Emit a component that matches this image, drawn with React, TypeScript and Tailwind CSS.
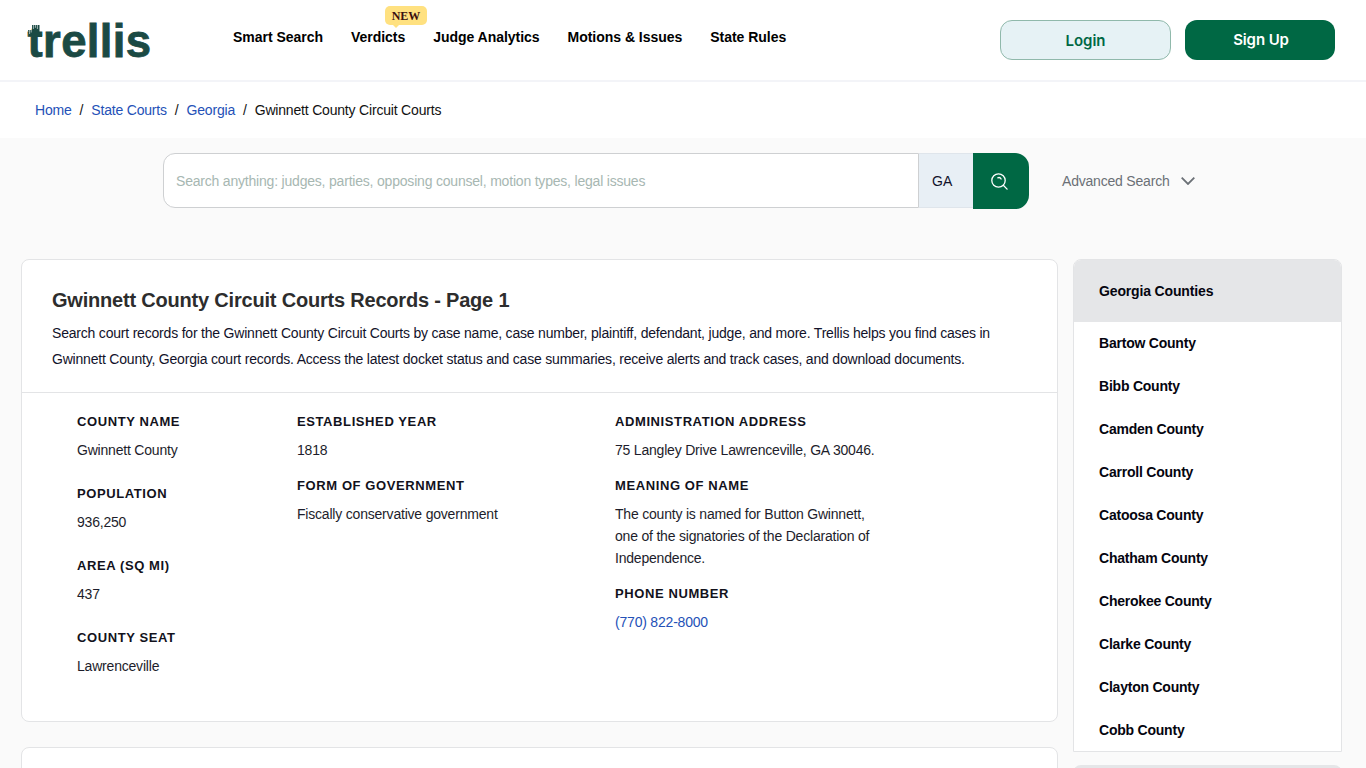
import React from "react";

type Detail = { label: string; value: string; link?: boolean };

const navItems = ["Smart Search", "Verdicts", "Judge Analytics", "Motions & Issues", "State Rules"];

const columnOne: Detail[] = [
  { label: "County Name", value: "Gwinnett County" },
  { label: "Population", value: "936,250" },
  { label: "Area (sq mi)", value: "437" },
  { label: "County Seat", value: "Lawrenceville" },
];

const columnTwo: Detail[] = [
  { label: "Established Year", value: "1818" },
  { label: "Form of Government", value: "Fiscally conservative government" },
];

const columnThree: Detail[] = [
  { label: "Administration Address", value: "75 Langley Drive Lawrenceville, GA 30046." },
  {
    label: "Meaning of Name",
    value: "The county is named for Button Gwinnett, one of the signatories of the Declaration of Independence.",
  },
  { label: "Phone Number", value: "(770) 822-8000", link: true },
];

const counties = [
  "Bartow County",
  "Bibb County",
  "Camden County",
  "Carroll County",
  "Catoosa County",
  "Chatham County",
  "Cherokee County",
  "Clarke County",
  "Clayton County",
  "Cobb County",
];

function Logo() {
  return (
    <svg className="block h-[60px] w-[130px] overflow-visible" viewBox="0 0 130 60" aria-label="trellis">
      <text
        x="-0.4"
        y="46.7"
        fontSize="45.5"
        fontWeight="700"
        letterSpacing="0.35"
        fill="#1b4a44"
        stroke="#1b4a44"
        strokeWidth="0.8"
        fontFamily="Liberation Sans, Arial, sans-serif"
      >
        trellis
      </text>
      {/* stepped columns on the crossbar of the t */}
      <path d="M0 20h4v-5h7.5v9H14v3H4v-1H1.5z" fill="#1b4a44" />
      <path d="M1.6 20v4M3.2 20v2.5M5.4 15v4M7.4 15v2.8M9.4 15v4" stroke="#fff" strokeWidth="0.6" />
    </svg>
  );
}

function Header() {
  return (
    <header className="flex h-[82px] items-start border-b-2 border-[#f3f4f8] bg-white pl-7">
      <div className="w-[205px] pt-2.5">
        <Logo />
      </div>
      <nav className="flex gap-7 pt-[27px] text-[14px] leading-5 font-bold tracking-[-0.03px] text-black">
        {navItems.map((item) => (
          <a key={item} href="#" className="relative whitespace-nowrap">
            {item}
            {item === "Verdicts" && (
              <span className="absolute -top-[21px] left-[34px] h-[19px] w-[42px] rounded-[5px] bg-[#ffe180] text-center font-['Liberation_Serif',serif] text-[12px] leading-5 text-[#3a1010]">
                NEW
                <span className="absolute top-[18px] left-[7px] border-x-4 border-t-4 border-x-transparent border-t-[#ffe180]" />
              </span>
            )}
          </a>
        ))}
      </nav>
      <div className="mt-5 mr-[31px] ml-auto flex gap-3.5 font-['Inter',sans-serif] text-[15px] font-semibold">
        <button className="h-10 w-[171px] rounded-xl border border-[#90b9ab] bg-[#e6f2f5] pt-0.5 text-[#006844]">
          Login
        </button>
        <button className="h-10 w-[150px] rounded-xl bg-[#006844] pl-0.5 tracking-[-0.1px] text-white">Sign Up</button>
      </div>
    </header>
  );
}

function Breadcrumbs() {
  return (
    <div className="flex h-14 items-center gap-2 bg-white pl-[35px] text-[14px] tracking-[-0.19px] text-[#111]">
      <a href="#" className="text-[#2451b7]">Home</a>
      <span>/</span>
      <a href="#" className="text-[#2451b7]">State Courts</a>
      <span>/</span>
      <a href="#" className="text-[#2451b7]">Georgia</a>
      <span>/</span>
      <span>Gwinnett County Circuit Courts</span>
    </div>
  );
}

function SearchBar() {
  return (
    <div className="flex h-[71px] pt-[15px] pl-[163px] text-[14px] tracking-[-0.2px]">
      <div className="flex h-[55px] w-[756px] items-center rounded-l-xl border border-[#ced0d2] bg-white pt-0.5 pl-3 text-[#a7b7b2]">
        Search anything: judges, parties, opposing counsel, motion types, legal issues
      </div>
      <div className="flex h-[55px] w-[54px] items-center border-y border-[#dfe5eb] bg-[#e8eff5] pt-0.5 pl-[13px] tracking-normal text-[#12122a]">
        GA
      </div>
      <button className="flex h-14 w-14 items-center rounded-r-[14px] bg-[#006844] pl-[18px]">
        <svg className="size-[17px]" viewBox="0 0 17 17" fill="none" stroke="white" strokeWidth="1.3" strokeLinecap="round">
          <circle cx="7.5" cy="7.5" r="6.7" />
          <path d="M12.3 12.3l3.8 3.8M6.8 4.8c1.5-.6 2.7 0 3.3 1.2" />
        </svg>
      </button>
      <div className="ml-[33px] flex h-14 items-center text-[#6b7076]">
        Advanced Search
        <svg className="ml-[11px] h-2 w-[14px]" viewBox="0 0 14 8" fill="none" stroke="currentColor" strokeWidth="1.8">
          <path d="M.7.7L7 7 13.3.7" />
        </svg>
      </div>
    </div>
  );
}

function DetailColumn({ items, className }: { items: Detail[]; className: string }) {
  return (
    <dl className={`flex flex-col ${className}`}>
      {items.map((item) => (
        <div key={item.label}>
          <dt className="text-[13px] leading-5 font-bold tracking-[0.6px] text-[#12121c] uppercase">{item.label}</dt>
          <dd className={`mt-[7px] leading-[22px] ${item.link ? "text-[#2451b7]" : "text-[#1d1d2b]"}`}>{item.value}</dd>
        </div>
      ))}
    </dl>
  );
}

function CountyCard() {
  return (
    <section className="h-[463px] rounded-lg border border-[#e3e4e6] bg-white text-[14px] tracking-[-0.2px]">
      <div className="h-[133px] border-b border-[#e3e4e6] pt-[26px] pl-[30px]">
        <h1 className="text-[20px] leading-7 font-bold text-[#2d2d2d]">Gwinnett County Circuit Courts Records - Page 1</h1>
        <p className="mt-1.5 w-[960px] leading-[26px] text-[#12122a]">
          Search court records for the Gwinnett County Circuit Courts by case name, case number, plaintiff, defendant,
          judge, and more. Trellis helps you find cases in
          <br />
          Gwinnett County, Georgia court records. Access the latest docket status and case summaries, receive alerts and
          track cases, and download documents.
        </p>
      </div>
      <div className="flex pt-[19px] pl-[55px]">
        <DetailColumn items={columnOne} className="w-[220px] gap-[23px]" />
        <DetailColumn items={columnTwo} className="w-[318px] gap-[15px]" />
        <DetailColumn items={columnThree} className="w-[265px] gap-[15px]" />
      </div>
    </section>
  );
}

function Sidebar() {
  return (
    <aside className="w-[269px] text-[14px] font-bold tracking-[-0.22px] text-[#05050f]">
      <section className="h-[493px] overflow-hidden rounded-t-lg border border-[#e3e4e6] bg-white">
        <h2 className="h-[62px] bg-[#e5e6e8] pl-[25px] leading-[62px] tracking-[-0.15px]">Georgia Counties</h2>
        <ul className="pl-[25px]">
          {counties.map((county) => (
            <li key={county} className="h-[43px] leading-[43px]">{county}</li>
          ))}
        </ul>
      </section>
      <section className="mt-[13px] h-16 rounded-t-lg bg-[#e5e6e8]" />
    </aside>
  );
}

export default function App() {
  return (
    <div className="h-screen overflow-hidden bg-[#fafafa] font-['Liberation_Sans',Arial,sans-serif]">
      <Header />
      <Breadcrumbs />
      <SearchBar />
      <main className="flex gap-[15px] pt-[50px] pl-[21px]">
        <div className="flex w-[1037px] flex-col gap-[25px]">
          <CountyCard />
          <section className="h-20 rounded-lg border border-[#e3e4e6] bg-white" />
        </div>
        <Sidebar />
      </main>
    </div>
  );
}
